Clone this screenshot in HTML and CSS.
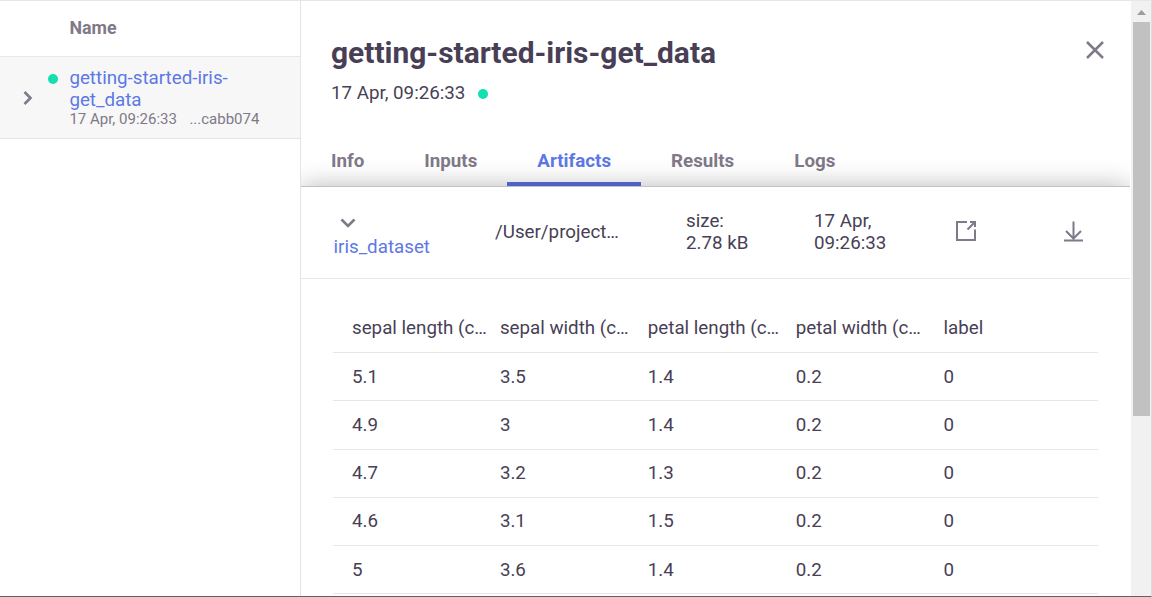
FILE: index.html
```
<!DOCTYPE html>
<html lang="en">
<head>
<meta charset="utf-8">
<title>getting-started-iris-get_data</title>
<link rel="stylesheet" href="styles.css">
</head>
<body>
<div class="app">
  <aside class="jobs">
    <div class="jobs-head">Name</div>
    <div class="job">
      <svg class="job-arrow" viewBox="0 0 12 16"><path d="M2.500 2l6 6-6 6"/></svg>
      <span class="dot job-dot"></span>
      <div class="job-text">
        <a class="job-name">getting-started-iris-<br>get_data</a>
        <div class="job-meta"><span>17 Apr, 09:26:33</span><span>...cabb074</span></div>
      </div>
    </div>
  </aside>
  <main class="panel">
    <header class="panel-head">
      <div class="title-row">
        <h1 class="title">getting-started-iris-get_data</h1>
        <svg class="close" viewBox="0 0 20 20"><path d="M2 2l16 16M18 2L2 18"/></svg>
      </div>
      <div class="updated"><span>17 Apr, 09:26:33</span><span class="dot"></span></div>
      <nav class="tabs">
        <a class="tab">Info</a>
        <a class="tab">Inputs</a>
        <a class="tab active">Artifacts</a>
        <a class="tab">Results</a>
        <a class="tab">Logs</a>
      </nav>
    </header>
    <section class="content">
      <div class="artifact">
        <div class="artifact-name">
          <svg class="chevron" viewBox="0 0 16 10"><path d="M1.500 1.500L8 8l6.500-6.500"/></svg>
          <a>iris_dataset</a>
        </div>
        <div class="artifact-path">/User/project…</div>
        <div>size:<br>2.78 kB</div>
        <div>17 Apr,<br>09:26:33</div>
        <svg class="popout" viewBox="0 0 20 20"><path d="M11 1H1v18h18V8.500M14 1h5v5M18.500 1.500l-7 7"/></svg>
        <svg class="download" viewBox="0 0 20 21"><path d="M9.500.5v17M2 10l7.500 7.500L17 10M0 19.500h19"/></svg>
      </div>
      <div class="preview">
        <div class="row head"><span>sepal length (c…</span><span>sepal width (c…</span><span>petal length (c…</span><span>petal width (c…</span><span>label</span></div>
        <div class="row"><span>5.1</span><span>3.5</span><span>1.4</span><span>0.2</span><span>0</span></div>
        <div class="row"><span>4.9</span><span>3</span><span>1.4</span><span>0.2</span><span>0</span></div>
        <div class="row"><span>4.7</span><span>3.2</span><span>1.3</span><span>0.2</span><span>0</span></div>
        <div class="row"><span>4.6</span><span>3.1</span><span>1.5</span><span>0.2</span><span>0</span></div>
        <div class="row"><span>5</span><span>3.6</span><span>1.4</span><span>0.2</span><span>0</span></div>
      </div>
    </section>
  </main>
  <div class="scrollbar">
    <svg class="scroll-up" viewBox="0 0 9 5"><path d="M0 5L4.500 0 9 5z"/></svg>
    <div class="thumb"></div>
  </div>
</div>
</body>
</html>
```

FILE: styles.css
```
* { box-sizing: border-box; }
body {
  margin: 0;
  font: 18.75px/22px Roboto, sans-serif;
  color: #483f56;
  background: #fff;
}
.app {
  display: flex;
  width: 1152px;
  height: 597px;
  overflow: hidden;
  border-top: 1px solid #e7e7e7;
  border-right: 1px solid #dcdcdc;
  border-bottom: 1px solid #626066;
}
svg { fill: none; stroke: #7f7989; stroke-width: 2; flex: none; }
.dot {
  width: 10px;
  height: 10px;
  border-radius: 50%;
  background: #13dfb0;
  flex: none;
}

.jobs { width: 301px; flex: none; border-right: 1px solid #e4e4e6; }
.jobs-head {
  height: 56px;
  padding: 16px 0 0 69.500px;
  font-weight: 700;
  font-size: 17.800px;
  color: #7f7989;
  border-bottom: 1px solid #e7e7e7;
}
.job {
  display: flex;
  height: 82px;
  padding: 10px 0 0 22px;
  background: #f7f7f7;
  border-bottom: 1px solid #e4e4e6;
}
.job-arrow { width: 12px; height: 16px; margin-top: 23px; stroke-width: 2.6; }
.job-dot { margin: 7px 11.400px 0 14px; }
.job-name { color: #5d78e6; }
.job-meta {
  display: flex;
  gap: 12.500px;
  font-size: 15px;
  line-height: 17px;
  color: #7f7989;
}

.panel { width: 829px; margin-right: 1px; flex: none; overflow: hidden; }
.panel-head { height: 185px; padding: 31px 25px 0 30px; }
.title-row { display: flex; justify-content: space-between; }
.title { margin: 0; font-size: 29.950px; line-height: 42px; font-weight: 700; }
.close { width: 20px; height: 20px; margin-top: 8px; stroke-width: 2.5; }
.updated { display: flex; gap: 13px; height: 22px; margin-top: 8px; }
.updated .dot { margin-top: 7px; }
.tabs { display: flex; margin: 33px 0 0 -30px; }
.tab {
  height: 49px;
  padding: 13px 30px 0;
  font-weight: 700;
  color: #7f7989;
}
.active { color: #5d78e6; border-bottom: 4px solid #5871e0; }

.content {
  position: relative;
  height: 420px;
  background: #fff;
  border-top: 1px solid #c2c2c2;
  box-shadow: 0 0 24px rgba(0, 0, 0, .28);
}
.artifact {
  display: grid;
  grid-template-columns: 161px 191px 128px 142px 108px 20px;
  align-items: center;
  height: 92px;
  padding: 0 0 2px 33px;
  border-bottom: 1px solid #e7e7e9;
}
.artifact-name { color: #5d78e6; padding-top: 13px; margin-left: -.5px; }
.artifact-name a { display: block; }
.chevron { display: block; width: 16px; height: 10px; margin: 0 0 8px 6.500px; stroke-width: 2.6; }
.popout { width: 20px; height: 20px; margin-bottom: 1px; }
.download { width: 20px; height: 21px; }
.preview { width: 765px; margin: 25px 0 0 32px; }
.row {
  display: grid;
  grid-template-columns: repeat(5, 147.9px);
  align-items: center;
  height: 48.200px;
  padding-left: 19px;
  border-bottom: 1px solid #e7e7e9;
}
.row.head { height: 49.200px; padding-bottom: 1px; }
.row span { white-space: nowrap; }

.scrollbar { width: 20px; flex: none; padding: 9px 0 0 2px; background: #f1f1f1; }
.scroll-up { display: block; width: 9px; height: 5px; margin-left: 4px; fill: #9c9c9c; stroke: none; }
.thumb { width: 17px; height: 394px; margin-top: 7px; background: #c1c1c1; }
```
